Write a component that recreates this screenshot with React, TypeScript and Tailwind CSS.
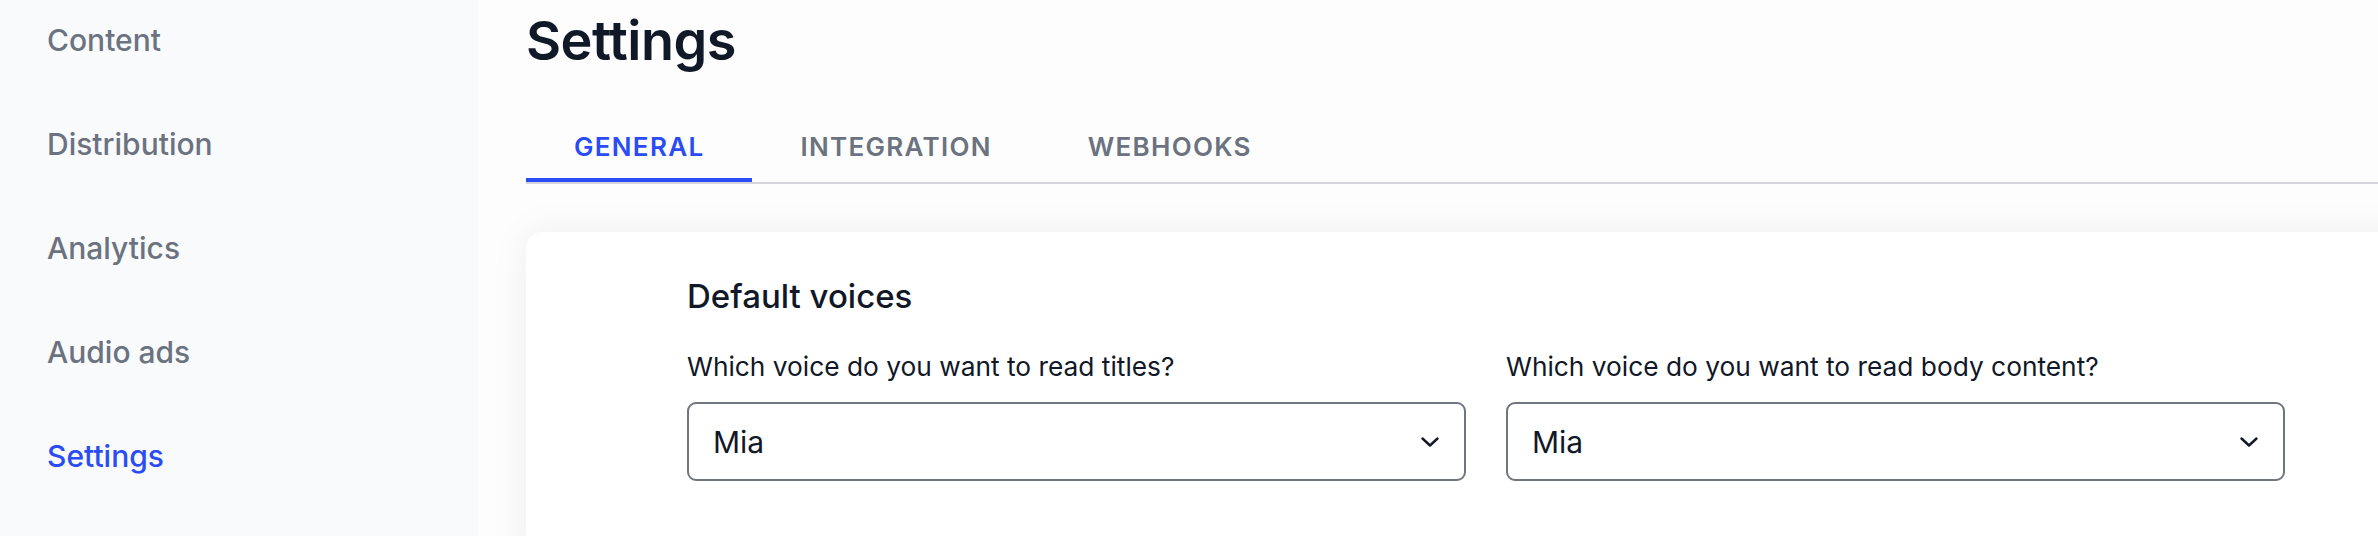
import React from "react";

const navItems = ["Content", "Distribution", "Analytics", "Audio ads", "Settings"];
const tabs = ["GENERAL", "INTEGRATION", "WEBHOOKS"];

function Chevron() {
  return (
    <svg width="18" height="10" viewBox="0 0 18 10" fill="none" className="shrink-0">
      <path d="M1.5 1.5 L9 8.5 L16.5 1.5" stroke="#111827" strokeWidth="2.4" strokeLinecap="round" strokeLinejoin="round" />
    </svg>
  );
}

function Select({ label }: { label: string }) {
  return (
    <div className="flex flex-col">
      <div className="text-[26.3px] leading-[32px] text-[#111827]">{label}</div>
      <div className="mt-[19px] flex h-[79px] items-center justify-between rounded-[9px] border-2 border-[#70757f] bg-white pl-[24px] pr-[25px]">
        <span className="text-[30px] leading-[36px] text-[#111827]">Mia</span>
        <Chevron />
      </div>
    </div>
  );
}

export default function App() {
  return (
    <div
      className="flex h-[536px] w-[2378px] overflow-hidden bg-[#fdfdfd]"
      style={{ fontFamily: "Inter, 'Noto Sans', 'Liberation Sans', sans-serif" }}
    >
      <aside className="flex w-[478px] shrink-0 flex-col gap-[67px] bg-[#f9fafb] pl-[47px] pt-[22px]">
        {navItems.map((item) => (
          <div
            key={item}
            className={`text-[30px] font-medium leading-[37px] ${item === "Settings" ? "text-[#2a4cf5]" : "text-[#6b7280]"}`}
          >
            {item}
          </div>
        ))}
      </aside>
      <main className="flex min-w-0 flex-1 flex-col pl-[48px] pt-[9px]">
        <h1 className="text-[54px] font-semibold leading-[64px] tracking-[-0.01em] text-[#111827]">Settings</h1>
        <div className="mt-[43px] flex border-b-2 border-[#d4d5da]">
          {tabs.map((t, i) => (
            <div
              key={t}
              className={`border-b-4 px-12 py-[15px] text-[26px] font-semibold leading-[32px] tracking-[0.05em] ${
                i === 0 ? "border-[#2a4cf5] text-[#2a4cf5]" : "border-transparent text-[#6b7280]"
              }`}
            >
              {t}
            </div>
          ))}
        </div>
        <div className="mt-12 w-[1900px] shrink-0 rounded-[16px] bg-white pl-[161px] pt-[45px] pb-24 shadow-[0_0_40px_rgba(0,0,0,0.06)]">
          <h2 className="text-[33px] font-medium leading-[38px] text-[#111827]">Default voices</h2>
          <div className="mt-[36px] grid w-[1598px] grid-cols-2 gap-x-10">
            <Select label="Which voice do you want to read titles?" />
            <Select label="Which voice do you want to read body content?" />
          </div>
        </div>
      </main>
    </div>
  );
}
